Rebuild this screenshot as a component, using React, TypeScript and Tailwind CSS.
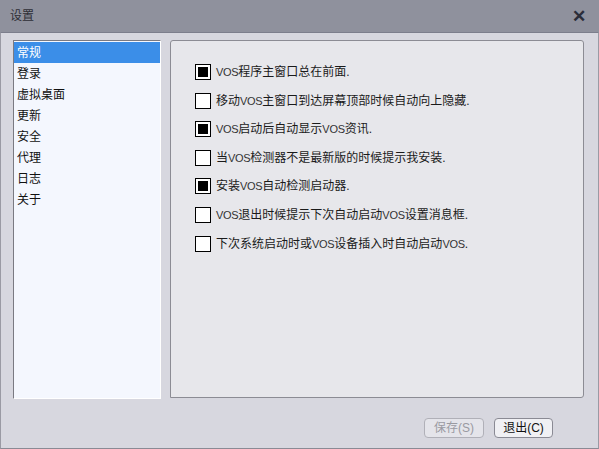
import React from 'react';

const font = { fontFamily: '"Liberation Sans", "Noto Sans CJK SC", sans-serif' };

const menuItems = ['常规', '登录', '虚拟桌面', '更新', '安全', '代理', '日志', '关于'];

const options = [
    { text: 'VOS程序主窗口总在前面.', checked: true },
    { text: '移动VOS主窗口到达屏幕顶部时候自动向上隐藏.', checked: false },
    { text: 'VOS启动后自动显示VOS资讯.', checked: true },
    { text: '当VOS检测器不是最新版的时候提示我安装.', checked: false },
    { text: '安装VOS自动检测启动器.', checked: true },
    { text: 'VOS退出时候提示下次自动启动VOS设置消息框.', checked: false },
    { text: '下次系统启动时或VOS设备插入时自动启动VOS.', checked: false },
];

// VOS in the reference is set in a smaller latin face
const renderLabel = (t: string) =>
    t.split(/(VOS)/).map((part, i) =>
        part === 'VOS' ? (
            <span key={i} className="text-[11px] tracking-[-0.3px] text-[#333]">
                {part}
            </span>
        ) : (
            <span key={i}>{part}</span>
        )
    );

const CheckBox = ({ checked }: { checked: boolean }) => (
    <div className="flex h-[16px] w-[16px] shrink-0 items-center justify-center border border-black bg-white">
        {checked && <div className="h-[10px] w-[10px] bg-black" />}
    </div>
);

const App = () => {
    const [selected, setSelected] = React.useState(0);
    const [checks, setChecks] = React.useState(options.map((o) => o.checked));

    return (
        <div style={font} className="flex h-[449px] w-[599px] flex-col bg-[#d6d6de] text-[12px] text-[#111]">
            <div className="flex h-[32px] shrink-0 items-center justify-between bg-[#8f919d] pl-[10px] pr-[13px]">
                <span className="text-[12px] text-[#2e2e36]">设置</span>
                <span className="text-[17px] font-bold leading-none text-[#2a2d3a]">✕</span>
            </div>
            <div className="flex flex-1 flex-col border-x border-b border-t border-x-[#9a9aa4] border-b-[#8a8a94] border-t-[#7c7e8c] bg-[#d7d7df]">
                <div className="flex gap-[9px] pl-[12px] pt-[7px]">
                    <div className="h-[359px] w-[148px] border border-b-white border-l-[#7a7a82] border-r-white border-t-[#7a7a82] bg-[#f4f7fe] pt-px">
                        {menuItems.map((m, i) => (
                            <div
                                key={m}
                                onClick={() => setSelected(i)}
                                className={`flex h-[21px] cursor-default items-center pl-[3px] text-[12px] ${
                                    selected === i ? 'bg-[#3b8ee8] text-white' : 'text-[#111]'
                                }`}
                            >
                                {m}
                            </div>
                        ))}
                    </div>
                    <div className="h-[358px] w-[414px] rounded-tl-[3px] rounded-tr-[3px] rounded-br-[3px] border border-[#8c8c94] bg-[#e7e7eb] pl-[24px] pt-[23px]">
                        <div className="flex flex-col gap-[12.6px]">
                            {options.map((o, i) => (
                                <div
                                    key={o.text}
                                    onClick={() => setChecks(checks.map((c, j) => (j === i ? !c : c)))}
                                    className="flex h-[16px] cursor-default items-center gap-[5px]"
                                >
                                    <CheckBox checked={checks[i]} />
                                    <span className="whitespace-nowrap text-[12px] text-[#1a1a1a]">{renderLabel(o.text)}</span>
                                </div>
                            ))}
                        </div>
                    </div>
                </div>
                <div className="flex justify-end gap-[10px] pr-[45px] pt-[19px]">
                    <button
                        type="button"
                        disabled
                        className="flex h-[20px] w-[60px] items-center justify-center rounded-[4px] border border-[#b0b0b8] bg-[#e4e4ea] text-[12px] text-[#9a9aa2]"
                    >
                        保存(S)
                    </button>
                    <button
                        type="button"
                        className="flex h-[20px] w-[59px] items-center justify-center rounded-[4px] border border-[#8a8a94] bg-[#f0f0f4] text-[12px] text-[#111]"
                    >
                        退出(C)
                    </button>
                </div>
            </div>
        </div>
    );
};

export default App;
